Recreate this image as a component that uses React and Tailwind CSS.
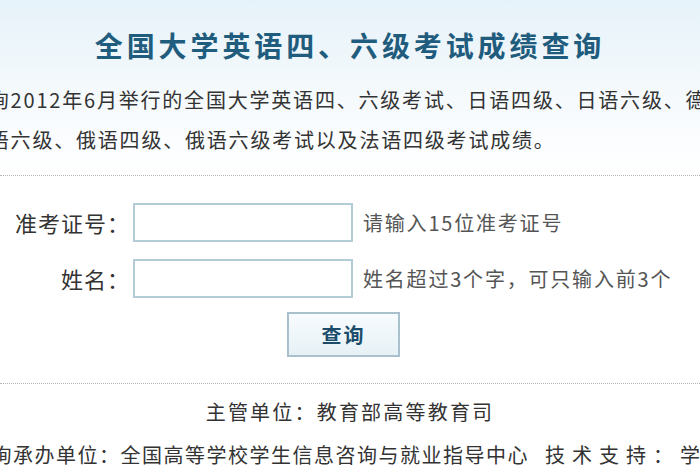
import React from 'react';

// 成绩查询页（截图区域 700x470，左右两侧文字被裁切）
const cjk = { fontFamily: '"Noto Sans CJK SC", "Noto Sans", sans-serif' };

const FormRow = ({ label, hint }) => (
    <div className="flex items-center h-[39px]">
        <div className="w-[130px] text-right text-[22px] tracking-[1px] text-[#333] whitespace-nowrap">{label}</div>
        <input className="ml-[3px] w-[220px] h-[39px] border-2 border-[#b3cbd5] bg-white outline-none" />
        <div className="ml-[10px] text-[20px] tracking-[1.8px] text-[#555] whitespace-nowrap">{hint}</div>
    </div>
);

const App = () => {
    return (
        <div className="w-[700px] h-[470px] overflow-hidden bg-white" style={cjk}>
            {/* 标题与说明 */}
            <div className="bg-gradient-to-b from-[#e6f2f9] via-[#f4f9fc] to-white pt-[25px] pb-[15px]">
                <h1 className="text-center text-[28px] leading-[40px] tracking-[3.9px] font-bold text-[#1f5c7d]">
                    全国大学英语四、六级考试成绩查询
                </h1>
                <p className="mt-[15px] -ml-[33px] whitespace-nowrap text-[20px] leading-[40px] tracking-[1.8px] text-[#333]">
                    查询2012年6月举行的全国大学英语四、六级考试、日语四级、日语六级、德语四级、
                    <br />
                    德语六级、俄语四级、俄语六级考试以及法语四级考试成绩。
                </p>
            </div>

            {/* 查询表单 */}
            <div className="border-t border-dotted border-[#b5b5b5] pt-[27px]">
                <FormRow label="准考证号：" hint="请输入15位准考证号" />
                <div className="mt-[17px]">
                    <FormRow label="姓名：" hint="姓名超过3个字，可只输入前3个" />
                </div>
                <div className="mt-[14px] pl-[287px]">
                    <button className="w-[113px] h-[45px] border-2 border-[#a8c1cc] bg-gradient-to-b from-[#f7fbfd] to-[#e6f1f6] text-[20px] font-bold tracking-[2px] text-[#1b4d6b]">
                        查询
                    </button>
                </div>
            </div>

            {/* 页脚 */}
            <div className="mt-[26px] border-t border-dotted border-[#b5b5b5] pt-[6px] text-[20px] leading-[43px] tracking-[1.5px] text-[#333] whitespace-nowrap">
                <div className="text-center tracking-[2.2px]">主管单位：教育部高等教育司</div>
                <div className="-ml-[30px]">
                    查询承办单位：全国高等学校学生信息咨询与就业指导中心
                    <span className="ml-[16px] tracking-[7px]">技术支持：学信网</span>
                </div>
            </div>
        </div>
    );
};

export default App;
